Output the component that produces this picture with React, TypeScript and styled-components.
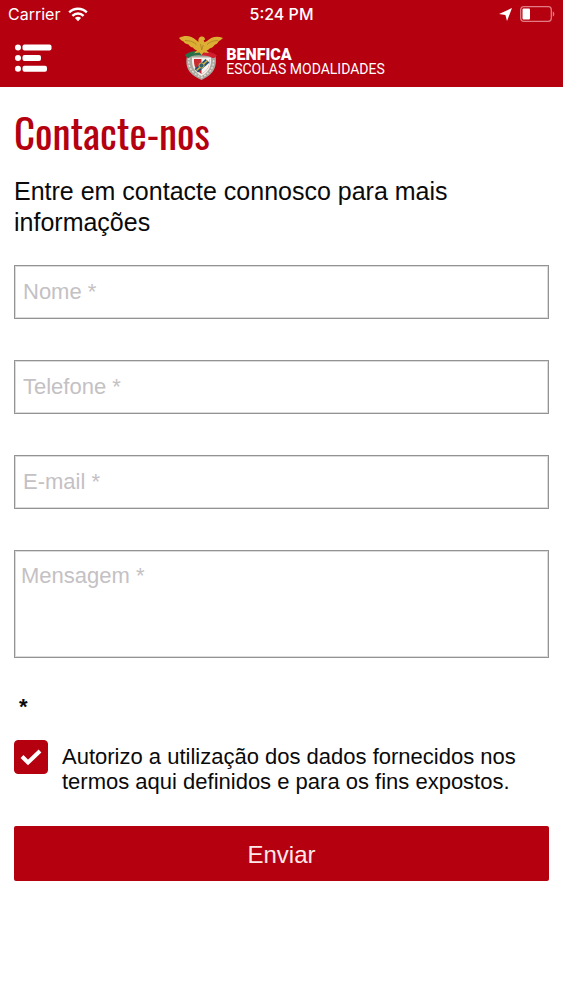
import React from "react";
import styled, { createGlobalStyle } from "styled-components";

const red = "#b5000f";
const sans = '"Liberation Sans", Arial, sans-serif';

const GlobalStyle = createGlobalStyle`
  *, *::before, *::after { box-sizing: border-box; }
  body { margin: 0; background: #fff; color: #0a0a0a; font-family: ${sans}; }
`;

const TopBar = styled.header`
  background: ${red};
  color: #fff;
`;

const StatusBar = styled.div`
  display: grid;
  grid-template-columns: 1fr auto 1fr;
  align-items: center;
  height: 28px;
  padding: 0 8px;
  font: 400 16px/28px Inter, sans-serif;
`;

const StatusGroup = styled.div<{ $end?: boolean }>`
  display: flex;
  align-items: center;
  justify-content: ${(p) => (p.$end ? "flex-end" : "flex-start")};
  gap: 8px;
`;

const Clock = styled.time`
  font-weight: 500;
`;

const NavBar = styled.nav`
  display: grid;
  grid-template-columns: 1fr auto 1fr;
  align-items: center;
  height: 59px;
  padding: 0 14px;
`;

const MenuButton = styled.button`
  justify-self: start;
  display: flex;
  padding: 0;
  border: 0;
  background: none;
  color: inherit;
`;

const Brand = styled.a`
  display: flex;
  align-items: center;
  gap: 2px;
  color: inherit;
  text-decoration: none;
`;

const BrandText = styled.span`
  display: flex;
  flex-direction: column;
  padding-top: 8px;
  font: 400 14px/15px Roboto, sans-serif;

  strong {
    font-size: 16px;
    font-weight: 900;
  }
`;

const Page = styled.main`
  padding: 23px 14px;
`;

const Title = styled.h1`
  margin: 0;
  color: ${red};
  font: 400 41px/44px Oswald, "Liberation Sans Narrow", sans-serif;
`;

const Intro = styled.p`
  margin: 22px 0 27px;
  font-size: 25px;
  line-height: 31px;
`;

const Form = styled.form`
  display: flex;
  flex-direction: column;
`;

const fieldLook = `
  display: block;
  width: 100%;
  margin: 0 0 41px;
  border: 1px solid #939393;
  border-radius: 0;
  background: #fff;
  box-shadow: inset 0 0 0 1px #dcdcdc;
  color: #0a0a0a;
  font: 400 22px/28px ${sans};
  outline: none;
  &::placeholder { color: #c4c1c4; opacity: 1; }
`;

const Field = styled.input`
  ${fieldLook}
  height: 54px;
  padding: 0 8px;
`;

const Message = styled.textarea`
  ${fieldLook}
  height: 108px;
  padding: 11px 6px;
  resize: none;
`;

const RequiredMark = styled.p`
  margin: 0 0 25px;
  padding-left: 5px;
  font-size: 22px;
  font-weight: 700;
  line-height: 16px;
`;

const Consent = styled.label`
  display: flex;
  align-items: flex-start;
  gap: 14px;
  margin-bottom: 32px;
  font-size: 22px;
  line-height: 25px;
`;

const CheckBox = styled.span`
  display: grid;
  flex: none;
  width: 34px;
  height: 34px;

  input, svg { grid-area: 1 / 1; }

  input {
    appearance: none;
    width: 34px;
    height: 34px;
    margin: 0;
    border: 1px solid ${red};
    border-radius: 4px;
    background: #fff;
  }
  input:checked { background: ${red}; }

  svg { place-self: center; pointer-events: none; }
`;

const ConsentText = styled.span`
  padding-top: 4px;
`;

const Submit = styled.button`
  height: 55px;
  padding: 2px 0 0;
  border: 0;
  border-radius: 2px;
  background: ${red};
  color: #fde9ea;
  font: 400 24px/28px ${sans};
`;

const WifiIcon = () => (
  <svg width="20" height="15" viewBox="0 0 20 15" fill="none" stroke="#fff" strokeWidth="2.4" aria-hidden="true">
    <path d="M1.2 5.4C6.2.5 13.8.5 18.8 5.4" />
    <path d="M4.4 8.8c3.2-3.1 8-3.1 11.2 0" />
    <path d="M6.9 11.1c1.8-1.7 4.4-1.7 6.2 0L10 14.2z" fill="#fff" stroke="none" />
  </svg>
);

const LocationIcon = () => (
  <svg width="13" height="13" viewBox="0 0 13 13" fill="#fff" aria-hidden="true">
    <path d="M13 0 8 13 6.400 7 0 6z" />
  </svg>
);

const BatteryIcon = () => (
  <svg width="35" height="16" viewBox="0 0 35 16" aria-hidden="true">
    <rect x=".7" y=".7" width="30.600" height="14.600" rx="3" fill="none" stroke="#e27c84" strokeWidth="1.300" />
    <rect x="2.500" y="2.500" width="7.500" height="11" rx="1" fill="#fff" />
    <path d="M32.800 5.500c2 .6 2 4.400 0 5z" fill="#e27c84" />
  </svg>
);

const MenuIcon = () => (
  <svg width="38" height="28" viewBox="0 0 38 28" fill="#fff" aria-hidden="true">
    <circle cx="4" cy="3.500" r="3" />
    <circle cx="4" cy="14" r="3" />
    <circle cx="4" cy="24.700" r="3" />
    <rect x="8.500" y=".5" width="29" height="6" rx="2" />
    <rect x="8.500" y="11" width="18.500" height="6" rx="2" />
    <rect x="8.500" y="21.700" width="24.500" height="6" rx="2" />
  </svg>
);

const Crest = () => (
  <svg width="46" height="46" viewBox="0 0 46 46" aria-hidden="true">
    <path d="M9 21c-2 9 0 18 14.500 24C37 39 39 30 37.500 21 33 17 14 17 9 21z" fill="#aaa79f" />
    <path d="M11 23c-1 8 1 14 12.500 19.500C34 37 36 31 35.500 23" fill="none" stroke="#dfddd6" strokeWidth="1.500" strokeDasharray="2 1.500" />
    <path d="M14 22.500h19c.5 9-2 14.500-9.500 18.500C16 37 13.500 31 14 22.500z" fill="#f2f0ea" />
    <path d="M16 24H31.500c.3 6.500-1.500 11.500-8 15-6-3.500-7.900-8.500-7.500-15z" fill="#c72a30" />
    <path d="M23.500 24h8c.3 6.500-1.500 11.500-8 15z" fill="#f7f5f0" />
    <path d="m16.500 34 11-10 4 3.500-11.500 10z" fill="#245078" />
    <path d="m18.500 35.500 11-10" stroke="#d9b543" strokeWidth="1.500" />
    <circle cx="23.500" cy="30.500" r="2.600" fill="#355f68" stroke="#d2b55b" />
    <path d="M7 20c3-3 9-4.500 16-4v4.500c-6-.8-10 .4-13 3z" fill="#26704a" />
    <path d="M23 16c7-.2 12 1.500 16 4.500l-3.500 3c-3.500-2.500-7.500-3.300-12.500-3z" fill="#d11f2d" />
    <path d="M1 3c6-3 12-2.600 17 2l2.500 2c-.5-3 .4-5.500 3.500-5.500 2 0 3.200 1.300 3 3.200l-1.300.5.800 2L29 6c4.500-4.200 10-5.500 16-3-2 2-3.500 2.500-4.500 3.500-1 2.200-3 3-4 3.500-1 2-3 3-4.500 3.200-1 1.300-2.300 2-3.500 2.300l2.500 2.500-5.500-.5-2 2.500-2-2.500-5.500.8 3-3c-1.800-.3-3.200-1.400-4-2.800-2-.2-3.700-1.500-4.500-3C8 9 6.500 8.500 5.500 6.500 4 6 2.500 5 1 3z" fill="#dcae34" />
    <path d="M7 5.500c5 0 8.500 1.300 11.500 4M40 5.500c-4.500 0-8 1.300-11 4M22.500 9l1.200 6 1.500-5" fill="none" stroke="#a87a20" strokeWidth=".7" />
  </svg>
);

export default function App() {
  return (
    <>
      <GlobalStyle />
      <TopBar>
        <StatusBar>
          <StatusGroup>
            <span>Carrier</span>
            <WifiIcon />
          </StatusGroup>
          <Clock>5:24 PM</Clock>
          <StatusGroup $end>
            <LocationIcon />
            <BatteryIcon />
          </StatusGroup>
        </StatusBar>
        <NavBar>
          <MenuButton type="button" aria-label="Menu">
            <MenuIcon />
          </MenuButton>
          <Brand href="#">
            <Crest />
            <BrandText>
              <strong>BENFICA</strong>
              <span>ESCOLAS MODALIDADES</span>
            </BrandText>
          </Brand>
        </NavBar>
      </TopBar>
      <Page>
        <Title>Contacte-nos</Title>
        <Intro>Entre em contacte connosco para mais informações</Intro>
        <Form onSubmit={(e) => e.preventDefault()}>
          <Field type="text" name="nome" aria-label="Nome" placeholder="Nome *" />
          <Field type="tel" name="telefone" aria-label="Telefone" placeholder="Telefone *" />
          <Field type="email" name="email" aria-label="E-mail" placeholder="E-mail *" />
          <Message name="mensagem" aria-label="Mensagem" placeholder="Mensagem *" />
          <RequiredMark>*</RequiredMark>
          <Consent>
            <CheckBox>
              <input type="checkbox" name="autorizo" defaultChecked />
              <svg width="22" height="18" viewBox="0 0 22 18" fill="none" stroke="#fff" strokeWidth="4" aria-hidden="true">
                <path d="m2 8.500 6 6L20 3" />
              </svg>
            </CheckBox>
            <ConsentText>
              Autorizo a utilização dos dados fornecidos nos termos aqui definidos e para os fins expostos.
            </ConsentText>
          </Consent>
          <Submit type="submit">Enviar</Submit>
        </Form>
      </Page>
    </>
  );
}
